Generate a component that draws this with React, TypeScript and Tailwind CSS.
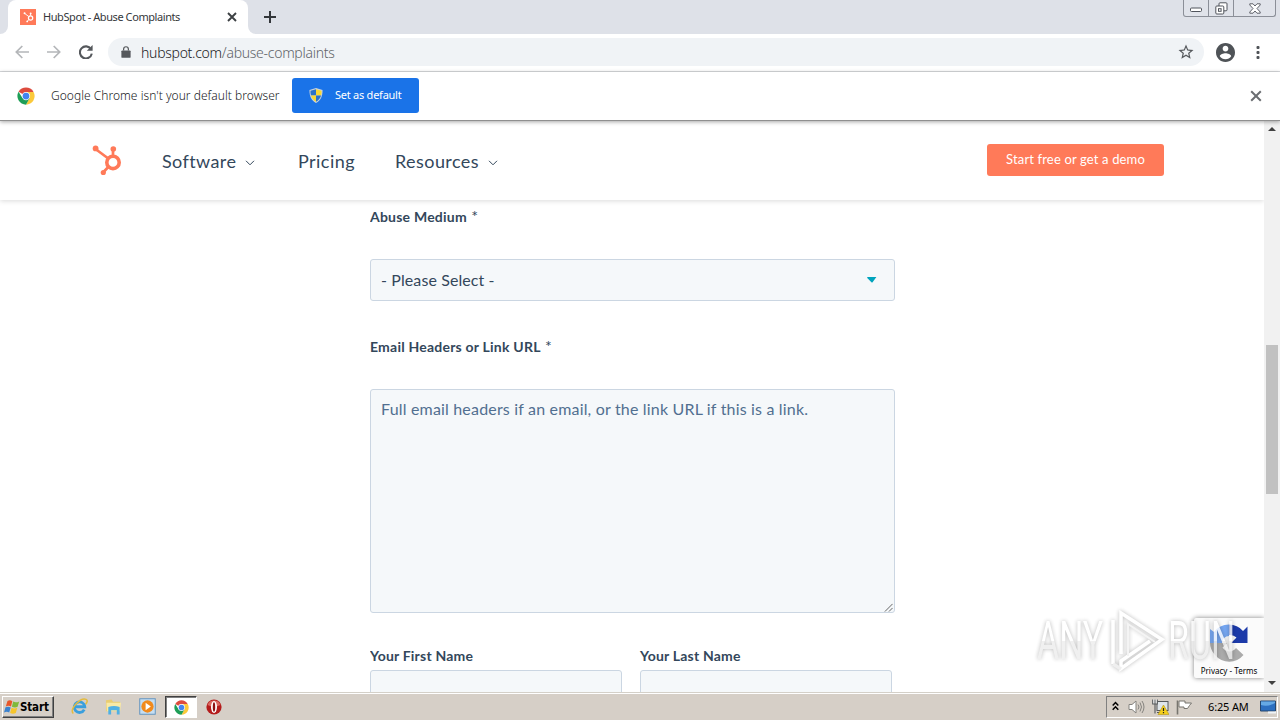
import React from "react";

const uiFont = "font-['Noto_Sans','Open_Sans',sans-serif]";
const pageFont = "font-['Lato',sans-serif]";

function ChromeLogo({ className }: { className: string }) {
  return (
    <svg viewBox="0 0 48 48" className={className}>
      <circle cx="24" cy="24" r="23" fill="#fff" />
      <path d="M24 24 L4.1 12.5 A23 23 0 0 1 43.9 12.5 Z" fill="#dd4b3e" />
      <path d="M24 13 H44.2 A23 23 0 0 1 24 47 L33.5 29.5 Z" fill="#fbc93b" />
      <path d="M4.1 12.5 A23 23 0 0 0 24 47 L33.8 29.5 L14.5 29.5 Z" fill="#1e9e57" />
      <circle cx="24" cy="24" r="11" fill="#fff" />
      <circle cx="24" cy="24" r="9" fill="#4385f0" />
    </svg>
  );
}

function Sprocket({ className }: { className: string }) {
  return (
    <svg viewBox="0 0 30 32" className={className} fill="none" stroke="currentColor">
      <circle cx="21" cy="17.4" r="6.2" strokeWidth="3.6" />
      <path d="M21 10.500V4.500M15.600 13L3.500 4M16.300 22L11.500 27" strokeWidth="2.700" />
      <g fill="currentColor" stroke="none">
        <circle cx="3.600" cy="3.400" r="2.900" />
        <circle cx="21.300" cy="4" r="2.800" />
        <circle cx="11.300" cy="27.500" r="2.600" />
      </g>
    </svg>
  );
}

function TabStrip() {
  return (
    <div className="flex h-[34px] shrink-0 justify-between bg-[#dee1e8]">
      <div className="flex">
        <div className="flex w-2 items-end bg-white">
          <div className="h-full w-2 rounded-br-lg bg-[#dee1e8]" />
        </div>
        <div className="flex w-[240px] items-center rounded-t-lg bg-white pr-[10px] pl-3">
          <div className="flex size-4 items-center justify-center bg-[#ff7a59] text-white">
            <Sprocket className="h-[11px] w-[11px]" />
          </div>
          <span className="ml-[7px] grow text-[11px] tracking-[-0.42px] whitespace-nowrap text-[#35373a]">HubSpot - Abuse Complaints</span>
          <svg viewBox="0 0 12 12" className="size-3 text-[#3c4043]" stroke="currentColor" strokeWidth="1.9">
            <path d="M2 2L10 10M10 2L2 10" />
          </svg>
        </div>
        <div className="w-2 bg-white">
          <div className="h-full w-2 rounded-bl-lg bg-[#dee1e8]" />
        </div>
        <svg viewBox="0 0 14 14" className="mt-[10px] ml-[7px] size-[14px]" stroke="#33363a" strokeWidth="2">
          <path d="M7 1V13M1 7H13" />
        </svg>
      </div>
      <div className="mr-1 flex h-[17px] w-[93px] rounded-b-[3px] border border-t-0 border-[#8b8f98] bg-[#e0e3ea]">
        <div className="flex w-[25px] items-center justify-center border-r border-[#8b8f98]">
          <svg viewBox="0 0 12 6" className="mt-1 h-[6px] w-3" fill="#fff" stroke="#50545c">
            <rect x=".5" y="1" width="11" height="3.5" rx="1" />
          </svg>
        </div>
        <div className="flex w-[25px] items-center justify-center border-r border-[#8b8f98]">
          <svg viewBox="0 0 13 13" className="size-[13px]" fill="#fff" stroke="#50545c">
            <rect x="4" y=".8" width="8" height="8" rx="1" />
            <rect x=".8" y="4" width="8" height="8" rx="1" />
            <rect x="3.5" y="6.7" width="2.6" height="2.6" />
          </svg>
        </div>
        <div className="flex grow items-center justify-center">
          <svg viewBox="0 0 12 11" className="h-[11px] w-3" fill="#fff" stroke="#50545c" strokeWidth=".9">
            <path d="M.8.8H4L6 3 8 .8H11.2V2L8 5.5 11.2 9V10.2H8L6 8 4 10.2H.8V9L4 5.5.8 2Z" />
          </svg>
        </div>
      </div>
    </div>
  );
}

function Toolbar() {
  return (
    <div className="flex h-[38px] shrink-0 items-center border-b border-[#d9dbde] bg-white pb-px pl-[15px]">
      <svg viewBox="0 0 14 14" className="size-[14px]" fill="none" stroke="#b4b6b9" strokeWidth="1.7">
        <path d="M14 7H1.5M7.3 1L1.3 7 7.3 13" />
      </svg>
      <svg viewBox="0 0 14 14" className="ml-[18px] size-[14px]" fill="none" stroke="#b4b6b9" strokeWidth="1.7">
        <path d="M0 7H12.5M6.7 1L12.7 7 6.7 13" />
      </svg>
      <svg viewBox="0 0 14 14" className="ml-[18px] size-[14px]" fill="none" stroke="#55585c" strokeWidth="2.1">
        <path d="M12 4.2A6 6 0 1 0 12.8 8.6" />
        <path d="M13.6 0V5.8H7.8Z" fill="#55585c" stroke="none" />
      </svg>
      <div className="ml-[15px] flex h-7 w-[1096px] items-center rounded-full bg-[#f0f3f6] pr-[9px] pl-[13px]">
        <svg viewBox="0 0 10 13" className="h-3 w-[10px]" fill="#55585c">
          <rect y="4.800" width="10" height="8" rx="1" />
          <path d="M2.400 5V3.400a2.600 2.600 0 0 1 5.200 0V5" fill="none" stroke="#55585c" strokeWidth="1.300" />
        </svg>
        <span className="ml-[10px] grow text-[14px] font-light tracking-[-0.28px] text-[#5f6368]">
          <span className="text-[#202124]">hubspot.com</span>/abuse-complaints
        </span>
        <svg viewBox="0 0 24 24" className="size-[18px]" fill="#55585c">
          <path d="M22 9.24l-7.19-.62L12 2 9.19 8.63 2 9.24l5.46 4.73L5.82 21 12 17.27 18.18 21l-1.63-7.03L22 9.24zM12 15.4l-3.76 2.27 1-4.28-3.32-2.88 4.38-.38L12 6.1l1.71 4.04 4.38.38-3.32 2.88 1 4.28L12 15.4z" />
        </svg>
      </div>
      <svg viewBox="2 2 20 20" className="ml-3 size-[19px]" fill="#4f5357">
        <path d="M12 2C6.48 2 2 6.48 2 12s4.48 10 10 10 10-4.48 10-10S17.52 2 12 2zm0 3c1.66 0 3 1.34 3 3s-1.34 3-3 3-3-1.34-3-3 1.34-3 3-3zm0 14.2c-2.5 0-4.71-1.28-6-3.22.03-1.99 4-3.08 6-3.08 1.99 0 5.97 1.09 6 3.08-1.29 1.94-3.5 3.22-6 3.22z" />
      </svg>
      <svg viewBox="0 0 4 14" className="ml-[21px] h-[14px] w-1" fill="#4f5357">
        <rect x=".5" y="1" width="3" height="3" rx="1" />
        <rect x=".5" y="6" width="3" height="3" rx="1" />
        <rect x=".5" y="11" width="3" height="3" rx="1" />
      </svg>
    </div>
  );
}

function InfoBar() {
  return (
    <div className="relative z-20 flex h-[49px] shrink-0 items-center border-b border-[#8f8f8f] bg-white pb-px pl-[17px] shadow-[0_1px_4px_rgba(0,0,0,0.35)]">
      <ChromeLogo className="size-[18px]" />
      <span className="ml-[16px] w-[241px] text-[12px] font-light tracking-[0.03px] whitespace-nowrap text-[#202124]">Google Chrome isn't your default browser</span>
      <div className="flex h-[35px] w-[127px] items-center rounded-[3px] bg-[#1a73e8] pl-[17px]">
        <svg viewBox="0 0 14 16" className="h-[15px] w-[14px]">
          <path d="M7 0L14 2C14 9 12 13 7 16 2 13 0 9 0 2Z" fill="#c9d3dd" />
          <path d="M7 1.400V8H1.600C1.200 6 1 4.500 1.100 3Z" fill="#2c72c9" />
          <path d="M7 1.400V8H12.400C12.800 6 13 4.500 12.900 3Z" fill="#f9d833" />
          <path d="M7 14.700V8H1.600C2.500 11 4 13 7 14.700Z" fill="#f9d833" />
          <path d="M7 14.700V8H12.400C11.500 11 10 13 7 14.700Z" fill="#2c72c9" />
        </svg>
        <span className="ml-[12px] text-[11px] tracking-[-0.25px] whitespace-nowrap text-white">Set as default</span>
      </div>
      <svg viewBox="0 0 12 12" className="mr-[18px] ml-auto size-3" stroke="#6b6e72" strokeWidth="2">
        <path d="M1.200 1.200L10.800 10.800M10.800 1.200L1.200 10.800" />
      </svg>
    </div>
  );
}

function Chevron() {
  return (
    <svg viewBox="0 0 10 6" className="mt-1 h-[6px] w-[10px]" fill="none" stroke="#33475b">
      <path d="M1 .8L5 4.800 9 .8" />
    </svg>
  );
}

function SiteNav() {
  return (
    <nav className="relative z-10 flex h-[79px] shrink-0 items-center bg-white pl-[92px] shadow-[0_1px_5px_rgba(0,0,0,0.15)]">
      <Sprocket className="h-8 w-[30px] text-[#ff7a59]" />
      <div className="mt-px ml-[40px] flex w-[136px] items-center gap-[9px] text-[18px] tracking-[0.4px] text-[#33475b]">Software<Chevron /></div>
      <div className="mt-px w-[97px] text-[18px] tracking-[0.45px] text-[#33475b]">Pricing</div>
      <div className="mt-px flex items-center gap-[9px] text-[18px] tracking-[0.42px] text-[#33475b]">Resources<Chevron /></div>
      <div className="mr-[100px] mb-[2px] ml-auto flex h-8 w-[177px] items-center justify-center rounded-[3px] bg-[#ff7a59] pt-px text-[13px] tracking-[0.150px] text-white">Start free or get a demo</div>
    </nav>
  );
}

function Label({ children, required }: { children: string; required?: boolean }) {
  return (
    <div className={`h-5 text-[14px] leading-5 font-bold whitespace-nowrap text-[#33475b] ${required ? "tracking-[0.220px]" : "tracking-[0.200px]"}`}>
      {children}
      {required && <span className="text-[16px] leading-none font-normal"> *</span>}
    </div>
  );
}

function ComplaintForm() {
  return (
    <div className="ml-[370px] flex w-[525px] flex-col overflow-hidden pt-[7px] text-[#33475b]">
      <Label required>Abuse Medium</Label>
      <div className="mt-8 flex h-[42px] shrink-0 items-center justify-between rounded-[3px] border border-[#cbd6e2] bg-[#f5f8fa] pr-[17px] pb-px pl-[10px] text-[16px]">
        <span className="tracking-[0.1px]">- Please Select -</span>
        <svg viewBox="0 0 10 6" className="h-[6px] w-[10px]" fill="#00a4bd">
          <path d="M.6 0H9.400L5.600 5.200Q5 6 4.400 5.200L0 .8Z" />
        </svg>
      </div>
      <div className="mt-9 shrink-0"><Label required>Email Headers or Link URL</Label></div>
      <div className="mt-8 flex h-[224px] shrink-0 flex-col justify-between rounded-[3px] border border-[#cbd6e2] bg-[#f5f8fa]">
        <span className="pt-[7px] pl-[10px] text-[16px] leading-6 tracking-[0.180px] whitespace-nowrap text-[#516f90]">Full email headers if an email, or the link URL if this is a link.</span>
        <svg viewBox="0 0 10 10" className="mr-px size-[9px] self-end" stroke="#555" strokeWidth="1">
          <path d="M1 9.500L9.500 1M5.500 9.500L9.500 5.500" />
        </svg>
      </div>
      <div className="mt-[33px] flex shrink-0 gap-[18px]">
        {["Your First Name", "Your Last Name"].map((name) => (
          <div key={name} className="w-[252px]">
            <Label>{name}</Label>
            <div className="mt-1 h-[42px] rounded-[3px] border border-[#cbd6e2] bg-[#f5f8fa]" />
          </div>
        ))}
      </div>
    </div>
  );
}

function RecaptchaBadge() {
  return (
    <div className="absolute right-0 bottom-[14px] flex h-[60px] w-[70px] flex-col items-center overflow-hidden rounded-l-[2px] bg-[#fbfbfb] pt-[6px] shadow-[0_0_5px_#808080]">
      <svg viewBox="0 0 38 38" className="size-[38px] shrink-0">
        <path d="M0 19V5L4 8A18.500 18.500 0 0 1 19 .5V12A7 7 0 0 0 12 19Z" fill="#76a7f2" />
        <path d="M19 .5A18.500 18.500 0 0 1 33 7L37.500 2.500V19H21L26.500 13.500A9 9 0 0 0 19 11Z" fill="#1c3aa9" />
        <path d="M0 19H17L12.500 23.500A8 8 0 0 0 26 24L33.500 31A18.500 18.500 0 0 1 5 31A18 18 0 0 1 0 19Z" fill="#ababab" />
      </svg>
      <span className={`${uiFont} mt-[3px] text-[8px] leading-[11px] tracking-[0.020px] whitespace-nowrap text-black`}>Privacy - Terms</span>
    </div>
  );
}

const markText =
  "h-[56px] w-[66px] origin-left scale-x-[0.640] bg-linear-to-b from-white from-50% to-[#ededed] to-50% bg-clip-text font-['Roboto',sans-serif] text-[53px] leading-[56px] whitespace-nowrap text-transparent";

function Watermark() {
  return (
    <div className="pointer-events-none absolute top-[609px] left-[1037px] z-30 flex h-[64px] w-[198px] items-center opacity-80 drop-shadow-[0_0_2px_rgba(0,0,0,0.35)]">
      <div className="w-[70px] shrink-0"><div className={`${markText} w-[105px]`}>ANY</div></div>
      <svg viewBox="0 0 58 64" className="h-[64px] w-[58px] shrink-0" fill="none" stroke="#fff" strokeWidth="3.5">
        <path d="M14 45V4L55 30.500 14 59.500V52L43 32" />
        <path d="M21 47V15L48 33" stroke="#f2f2f2" strokeWidth="2" />
        <path d="M6 55V11" />
        <path d="M6 55L14 60" stroke="#ececec" />
      </svg>
      <div className="ml-[3px] w-[66px] shrink-0"><div className={`${markText} w-[108px]`}>RUN</div></div>
    </div>
  );
}

function PageScrollbar() {
  return (
    <div className="flex w-4 shrink-0 flex-col items-center bg-[#f1f1f1]">
      <svg viewBox="0 0 8 4" className="mt-[6px] h-1 w-2" fill="#404040"><path d="M0 4L4 0 8 4Z" /></svg>
      <div className="mt-[214px] h-[149px] w-3 bg-[#c1c1c1]" />
      <svg viewBox="0 0 8 4" className="mt-auto mb-[7px] h-1 w-2" fill="#404040"><path d="M0 0L4 4 8 0Z" /></svg>
    </div>
  );
}

function Taskbar() {
  return (
    <div className="flex h-7 shrink-0 items-start border-t border-[#d4d0c8] bg-[#d6cfc7] shadow-[inset_0_1px_0_#fff]">
      <div className="mt-[3px] ml-[2px] flex h-[22px] w-[52px] items-center border border-t-white border-r-[#404040] border-b-[#404040] border-l-white pl-px shadow-[inset_-1px_-1px_0_#808080]">
        <svg viewBox="0 0 16 16" className="size-4 shrink-0">
          <path d="M3.500 2Q6 .5 8.300 2.200L7 7.400Q4.500 6 1.800 7.400Z" fill="#e8572a" />
          <path d="M9.200 2.600Q12 4 15.200 2.400L13.600 7.800Q11 9 7.900 7.700Z" fill="#7fb93c" />
          <path d="M1.500 8.300Q4.200 7 6.700 8.400L5.200 13.600Q3 12 0 13.400Z" fill="#3b82cf" />
          <path d="M7.600 8.800Q10.500 10 13.300 8.700L11.800 14Q9 15.400 6.100 14Z" fill="#f6c52c" />
        </svg>
        <span className="mt-px font-['DejaVu_Sans_Condensed','DejaVu_Sans',sans-serif] text-[11.500px] font-bold tracking-[-0.150px] text-black">Start</span>
      </div>
      <div className="mt-[5px] ml-[17px] flex items-center">
        <svg viewBox="0 0 18 18" className="size-[17px]" fill="none">
          <path d="M14 12.300A5.600 5.600 0 1 1 14.600 9.300H4.500" stroke="#3a9fdd" strokeWidth="3" />
          <path d="M2.500 16.500C-2 12 10 -1 16 1.500Q18.500 3 15.500 6.500" stroke="#e4bb3e" strokeWidth="1.600" />
        </svg>
        <svg viewBox="0 0 18 18" className="ml-[17px] size-[17px]">
          <path d="M1 2.500L7 1.500 8.500 4H16V14H1Z" fill="#e9cd72" />
          <path d="M1.500 5H17L16 14H2Z" fill="#f8e9a6" />
          <path d="M3.500 9.500Q9.500 7.500 15.500 9.500V17.500H12.500V13H6.500V17.500H3.500Z" fill="#50b0e4" />
        </svg>
        <svg viewBox="0 0 18 18" className="ml-[17px] size-[17px]">
          <rect x=".8" y=".8" width="16.400" height="16.400" fill="#c5def2" stroke="#5f91bd" />
          <circle cx="9" cy="9" r="6.500" fill="#f18a1c" />
          <path d="M7 5L12.500 9 7 13Z" fill="#fff" />
        </svg>
      </div>
      <div className="mt-[3px] ml-[9px] flex h-[22px] w-8 items-center justify-center border border-t-[#404040] border-r-white border-b-white border-l-[#404040] bg-white shadow-[inset_1px_1px_0_#808080]">
        <ChromeLogo className="size-[15px]" />
      </div>
      <svg viewBox="0 0 16 16" className="mt-[6px] ml-[9px] size-4">
        <circle cx="8" cy="8" r="7.600" fill="#b41c1c" />
        <path d="M1.500 6A7 7 0 0 1 14.500 6Q8 9 1.500 6Z" fill="#db6a62" />
        <ellipse cx="8" cy="8" rx="3" ry="6" fill="#fff" />
        <ellipse cx="8" cy="8" rx="1.200" ry="4.800" fill="#8d1111" />
      </svg>
      <div className="mt-[3px] mr-[2px] ml-auto flex h-[22px] w-[172px] items-center border border-t-[#808080] border-r-white border-b-white border-l-[#808080] pl-[5px]">
        <svg viewBox="0 0 7 10" className="mb-[3px] h-[10px] w-[7px]" fill="none" stroke="#000" strokeWidth="1.500">
          <path d="M.7 4.500L3.500 1.500 6.300 4.500M.7 8.800L3.500 5.800 6.300 8.800" />
        </svg>
        <svg viewBox="0 0 17 16" className="ml-[9px] h-4 w-[17px]" fill="#fff" stroke="#85837f">
          <path d="M1 5.500H4L8 2V14L4 10.500H1Z" />
          <path d="M10 5.500Q12 8 10 10.500M12 3.500Q15 8 12 12.500M14 2Q18 8 14 14" fill="none" />
        </svg>
        <svg viewBox="0 0 17 16" className="ml-[7px] h-4 w-[17px]">
          <rect x="5" y="2.500" width="11" height="9" fill="#dfe5ea" stroke="#55595c" />
          <path d="M5 13.500H14" stroke="#55595c" />
          <path d="M.7 .5V5H5.300V.5M3 .5V14.500" fill="#fff" stroke="#55595c" strokeWidth="1.100" />
          <path d="M11.500 6L17 15.500H6Z" fill="#f5cf1b" stroke="#b59616" strokeWidth=".6" />
          <path d="M11.500 9V12M11.500 13V14.300" stroke="#222" strokeWidth="1.200" />
        </svg>
        <svg viewBox="0 0 17 16" className="ml-[7px] h-4 w-[17px]" fill="#fff" stroke="#77756f">
          <path d="M1.500 1.500V15.500" strokeWidth="1.600" />
          <path d="M3 2H9V4H15.500L13.500 6.500 11.500 9.500H8V8H3Z" />
        </svg>
        <span className={`${uiFont} ml-[15px] text-[11px] tracking-[-0.150px] whitespace-nowrap text-black`}>6:25 AM</span>
        <svg viewBox="0 0 16 14" className="mr-px ml-auto h-[14px] w-4">
          <path d="M.5 1H15.500V11H.5Z" fill="#2c6fc0" stroke="#24466e" />
          <path d="M1 5Q8 7 15 3V1.500H1Z" fill="#65a9e5" />
          <path d="M8 12.500H16" stroke="#eef3f7" strokeWidth="2" />
        </svg>
      </div>
    </div>
  );
}

export default function App() {
  return (
    <div className={`${uiFont} relative flex h-[720px] w-[1280px] flex-col overflow-hidden bg-white`}>
      <TabStrip />
      <Toolbar />
      <InfoBar />
      <div className="flex min-h-0 grow">
        <main className={`${pageFont} relative flex min-w-0 grow flex-col overflow-hidden`}>
          <SiteNav />
          <ComplaintForm />
          <RecaptchaBadge />
        </main>
        <PageScrollbar />
      </div>
      <Taskbar />
      <Watermark />
    </div>
  );
}
